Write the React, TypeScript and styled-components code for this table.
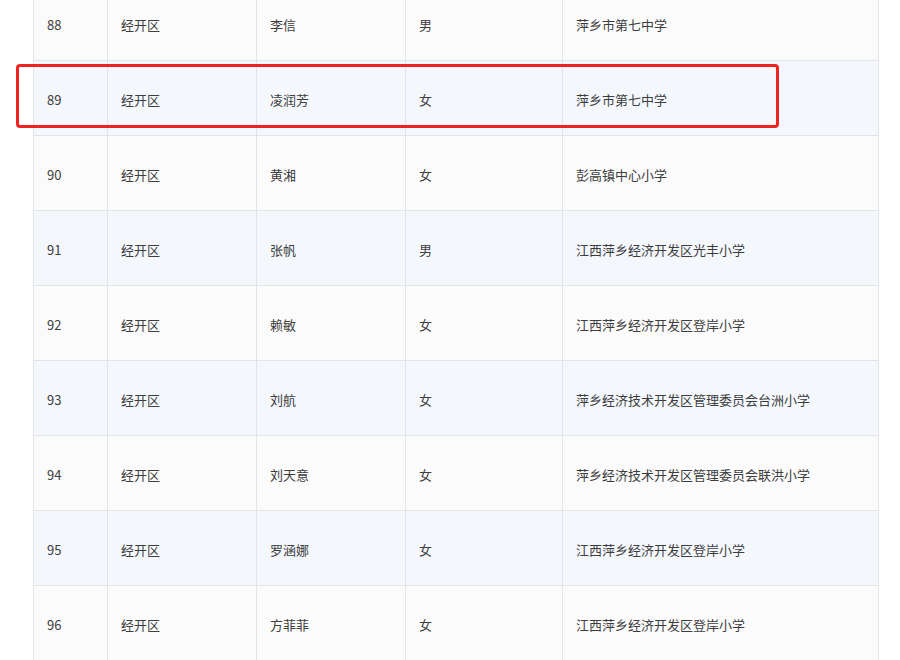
import React from "react";
import styled, { createGlobalStyle } from "styled-components";

const Global = createGlobalStyle`
  html, body { margin: 0; padding: 0; background: #ffffff; overflow: hidden; }
  body { font-family: "Noto Sans CJK SC", "Noto Sans", sans-serif; }
`;

const Page = styled.div`
  position: relative;
  width: 900px;
  height: 660px;
  overflow: hidden;
  background: #ffffff;
`;

const Wrap = styled.div`
  margin-top: -15px;
  padding-left: 33px;
`;

const Table = styled.table`
  border-collapse: collapse;
  table-layout: fixed;
  width: 845px;
`;

const Col = styled.col<{ $w: number }>`
  width: ${(p) => p.$w}px;
`;

const Row = styled.tr<{ $alt: boolean }>`
  height: 75px;
  background: ${(p) => (p.$alt ? "#f4f8fd" : "#fbfbfb")};
`;

const Cell = styled.td`
  border: 1px solid #e2e4e8;
  padding: 2px 0 0 13px;
  font-size: 13px;
  color: #3d3d3d;
  vertical-align: middle;
  white-space: nowrap;
`;

const Highlight = styled.div`
  position: absolute;
  left: 16px;
  top: 64px;
  width: 757px;
  height: 58px;
  border: 3px solid #f02222;
  border-radius: 4px;
  pointer-events: none;
`;

const widths = [74, 149, 149, 157, 316];

const rows: [string, string, string, string, string][] = [
  ["88", "经开区", "李信", "男", "萍乡市第七中学"],
  ["89", "经开区", "凌润芳", "女", "萍乡市第七中学"],
  ["90", "经开区", "黄湘", "女", "彭高镇中心小学"],
  ["91", "经开区", "张帆", "男", "江西萍乡经济开发区光丰小学"],
  ["92", "经开区", "赖敏", "女", "江西萍乡经济开发区登岸小学"],
  ["93", "经开区", "刘航", "女", "萍乡经济技术开发区管理委员会台洲小学"],
  ["94", "经开区", "刘天意", "女", "萍乡经济技术开发区管理委员会联洪小学"],
  ["95", "经开区", "罗涵娜", "女", "江西萍乡经济开发区登岸小学"],
  ["96", "经开区", "方菲菲", "女", "江西萍乡经济开发区登岸小学"],
];

export default function App() {
  return (
    <Page>
      <Global />
      <Wrap>
        <Table>
          <colgroup>
            {widths.map((w, i) => (
              <Col key={i} $w={w} />
            ))}
          </colgroup>
          <tbody>
            {rows.map((r, i) => (
              <Row key={r[0]} $alt={i % 2 === 1}>
                {r.map((c, j) => (
                  <Cell key={j}>{c}</Cell>
                ))}
              </Row>
            ))}
          </tbody>
        </Table>
      </Wrap>
      <Highlight />
    </Page>
  );
}
